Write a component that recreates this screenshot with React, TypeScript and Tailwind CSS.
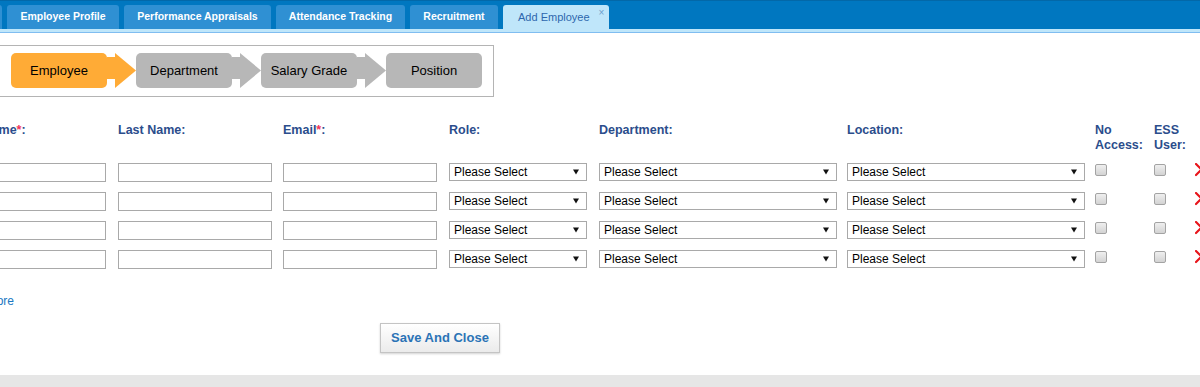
import React from "react";

const tabs = [
  { label: "", w: "w-[50px]" },
  { label: "Employee Profile", w: "w-[112px]" },
  { label: "Performance Appraisals", w: "w-[147px]" },
  { label: "Attendance Tracking", w: "w-[129px]" },
  { label: "Recruitment", w: "w-[88px]" },
];

const steps = ["Employee", "Department", "Salary Grade", "Position"];

const grid =
  "grid grid-cols-[166px_165px_166px_150px_248px_248px_59px_41px_40px]";

function StepArrow({ color }: { color: string }) {
  return (
    <svg width="29" height="35" viewBox="0 0 29 35" className="shrink-0">
      <rect x="0" y="4" width="9" height="22" fill={color} />
      <polygon points="8,0 8,35 29,17.5" fill={color} />
    </svg>
  );
}

function Label({ text, required }: { text: string; required?: boolean }) {
  return (
    <div className="text-[12.5px] leading-[15px] font-bold text-[#2b4d8c]">
      {text}
      {required && <span className="text-[#f2335a]">*</span>}:
    </div>
  );
}

function TextBox({ w }: { w: string }) {
  return <div className={`${w} h-[19px] border border-[#a9a9a9] bg-white`} />;
}

function SelectBox({ w }: { w: string }) {
  return (
    <div
      className={`${w} h-[18px] border border-[#a9a9a9] bg-white flex items-center justify-between pl-[4px] pr-[7px] text-[12px] text-black`}
    >
      <span>Please Select</span>
      <svg width="6" height="6" viewBox="0 0 6 6">
        <polygon points="0,0.5 6,0.5 3,5.5" fill="#111" />
      </svg>
    </div>
  );
}

function CheckBox() {
  return (
    <div className="w-[12px] h-[12px] mt-[1px] rounded-[2px] border border-[#a3a3a3] bg-linear-to-b from-[#efefef] to-[#d3d3d3]" />
  );
}

function RemoveIcon() {
  return (
    <svg width="14" height="14" viewBox="0 0 14 14">
      <path d="M1 1 L12 12 M12 1 L1 12" stroke="#e8151b" strokeWidth="2.2" strokeLinecap="round" />
    </svg>
  );
}

export default function App() {
  return (
    <div className="w-[1200px] h-[387px] overflow-hidden flex flex-col bg-white font-['Liberation_Sans',Arial,sans-serif]">
      {/* tab bar */}
      <div className="h-[29px] bg-[#0077c0] border-t border-[#0368a8] flex items-end">
        <div className="flex items-end gap-[5px] -ml-[48px]">
          {tabs.map((t, i) => (
            <div
              key={i}
              className={`${t.w} h-[24px] rounded-t-[3px] bg-[#2f90d3] text-white font-bold text-[10.5px] flex items-center justify-center`}
            >
              {t.label}
            </div>
          ))}
          <div className="w-[106px] h-[24px] rounded-t-[3px] bg-[#bfe6fa] flex items-center pl-[15px] text-[11px] text-[#2d66ad]">
            Add Employee
            <span className="ml-[9px] -mt-[9px] text-[10px] leading-none text-[#6c9fcc]">×</span>
          </div>
        </div>
      </div>
      <div className="h-[3px] bg-[#bfe6fa]" />
      <div className="h-[1px] bg-[#80bdf0]" />

      {/* content, scrolled a bit to the right */}
      <div className="flex-1 -ml-[48px]">
        <div className="ml-[46px] mt-[12px] w-fit border border-[#b4b4b4] pl-[12px] pr-[11px] pt-[7px] pb-[8px] flex items-center">
          {steps.map((s, i) => {
            const color = i === 0 ? "#ffab36" : "#b7b7b7";
            return (
              <React.Fragment key={s}>
                <div
                  className={`w-[96px] h-[35px] shrink-0 rounded-[5px] flex items-center justify-center text-[13px] text-black ${
                    i === 0 ? "bg-[#ffab36]" : "bg-[#b7b7b7]"
                  }`}
                >
                  {s}
                </div>
                {i < steps.length - 1 && <StepArrow color={color} />}
              </React.Fragment>
            );
          })}
        </div>

        {/* header row */}
        <div className={`${grid} mt-[26px] h-[40px] items-start`}>
          <Label text="First Name" required />
          <Label text="Last Name" />
          <Label text="Email" required />
          <Label text="Role" />
          <Label text="Department" />
          <Label text="Location" />
          <div className="text-[12.5px] leading-[15px] font-bold text-[#2b4d8c]">
            No
            <br />
            Access:
          </div>
          <div className="text-[12.5px] leading-[15px] font-bold text-[#2b4d8c]">
            ESS
            <br />
            User:
          </div>
          <div />
        </div>

        {/* rows */}
        <div className={`${grid} gap-y-[10px] items-start`}>
          {[0, 1, 2, 3].map((r) => (
            <React.Fragment key={r}>
              <TextBox w="w-[154px]" />
              <TextBox w="w-[154px]" />
              <TextBox w="w-[154px]" />
              <SelectBox w="w-[138px]" />
              <SelectBox w="w-[238px]" />
              <SelectBox w="w-[238px]" />
              <CheckBox />
              <CheckBox />
              <RemoveIcon />
            </React.Fragment>
          ))}
        </div>

        <div className="ml-[10px] mt-[25px] text-[12px] leading-[14px] text-[#1a78c2]">Add More</div>

        <button className="ml-[428px] mt-[15px] w-[120px] h-[30px] border border-[#c4c4c4] bg-linear-to-b from-white to-[#ebebeb] shadow-[0_1px_2px_rgba(0,0,0,0.18)] text-[13px] font-bold text-[#2a73b6]">
          Save And Close
        </button>
      </div>

      <div className="h-[12px] bg-[#e6e6e6]" />
    </div>
  );
}
